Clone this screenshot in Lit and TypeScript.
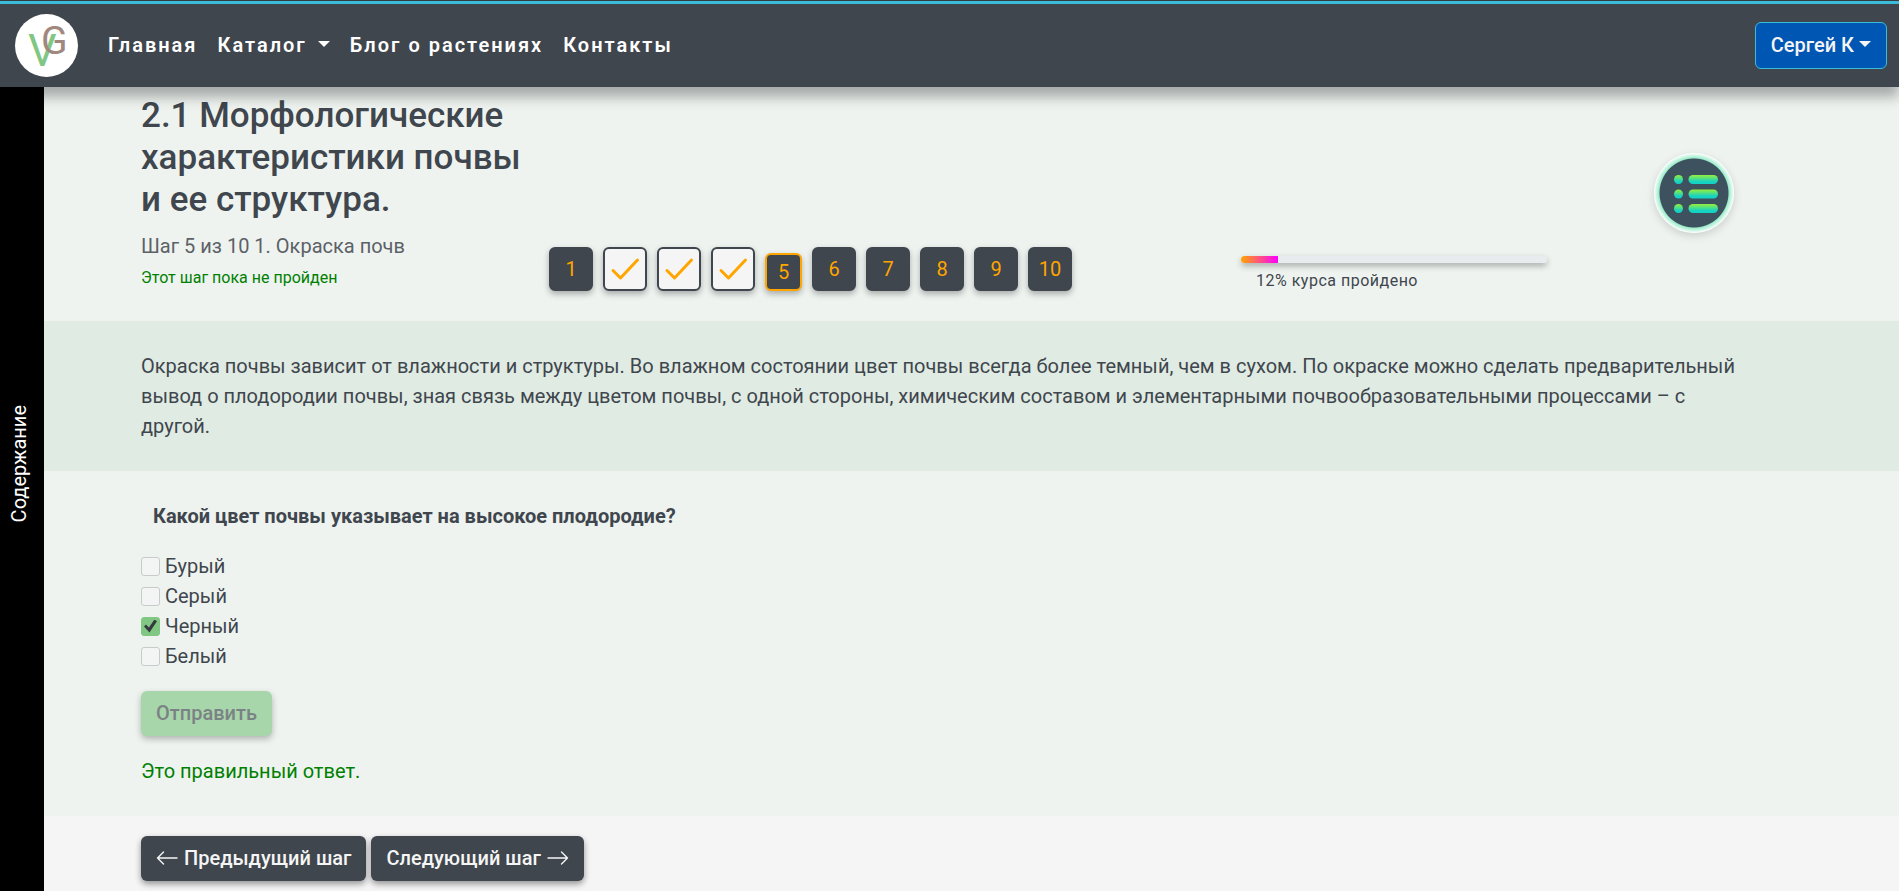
import { LitElement, html, css, svg } from "lit";
import { customElement, state } from "lit/decorators.js";

interface Step {
  n: number;
  status: "done" | "current" | "plain";
}

@customElement("site-logo")
class SiteLogo extends LitElement {
  static styles = css`
    :host { display: block; }
    svg { display: block; width: 63px; height: 63px; }
    .v { font: 400 45px Roboto, sans-serif; fill: #81c784; }
    .g { font: 400 39px Roboto, sans-serif; fill: #a1887f; }
  `;
  render() {
    return html`<svg viewBox="0 0 63 63" role="img" aria-label="VG">
      <circle cx="31.5" cy="31.5" r="31.5" fill="#fff"></circle>
      <text class="v" x="13" y="52">V</text>
      <text class="g" x="26" y="40">G</text>
    </svg>`;
  }
}

@customElement("step-list")
class StepList extends LitElement {
  static properties = { steps: { attribute: false } };
  declare steps: Step[];

  static styles = css`
    :host { display: block; }
    .steps { display: flex; align-items: flex-end; gap: 10px; margin: 0; padding: 0; list-style: none; }
    .step {
      box-sizing: border-box; display: flex; align-items: center; justify-content: center;
      width: 44px; height: 44px; border: 2px solid #3f464d; border-radius: 6px;
      background: #3f464d; color: orange; text-decoration: none;
      font: 400 20px/30px Roboto, sans-serif; box-shadow: 0 3px 6px rgba(0, 0, 0, 0.3);
    }
    .done { background: #f5f5f5; }
    .current { width: 37px; height: 38px; border-color: orange; }
    svg { display: block; width: 30px; height: 24px; }
  `;
  render() {
    return html`<ol class="steps">
      ${this.steps.map(
        (s) => html`<li>
          <a class="step ${s.status}" href="#step-${s.n}" aria-label="Шаг ${s.n}">
            ${s.status === "done"
              ? html`<svg viewBox="0 0 30 24" fill="none" stroke="orange" stroke-width="3" stroke-linecap="round" stroke-linejoin="round">
                  <path d="M3 13.5 L10.5 21 L27.5 3"></path>
                </svg>`
              : s.n}
          </a>
        </li>`
      )}
    </ol>`;
  }
}

@customElement("app-root")
class AppRoot extends LitElement {
  @state() private progress = 12;
  private steps: Step[] = Array.from({ length: 10 }, (_, i) => ({
    n: i + 1,
    status: i + 1 === 5 ? "current" : i >= 1 && i <= 3 ? "done" : "plain",
  }));
  private answers = [
    { id: "brown", text: "Бурый", checked: false },
    { id: "grey", text: "Серый", checked: false },
    { id: "black", text: "Черный", checked: true },
    { id: "white", text: "Белый", checked: false },
  ];

  static styles = css`
    :host {
      display: flex; flex-direction: column; min-height: 100vh;
      font: 400 20px/30px Roboto, sans-serif; color: #3f464d; background: #f5f5f5;
    }
    a { text-decoration: none; color: inherit; }
    button { font: inherit; font-weight: 500; border: 0; border-radius: 6px; cursor: pointer; }
    .line { height: 3px; border-top: 1px solid #343a40; background: #3bbcd9; }
    .header {
      position: relative; z-index: 1; background: #3f464d;
      box-shadow: 0 10px 12px rgba(0, 0, 0, 0.3);
    }
    .bar { display: flex; align-items: center; padding: 10px 12px 10px 15px; }
    .nav { display: flex; gap: 20px; margin-left: 30px; padding-bottom: 2px; flex: 1; color: #fff; font-weight: 600; letter-spacing: 2px; }
    .caret {
      display: inline-block; vertical-align: 5px; border: 6px solid transparent;
      border-top-color: currentColor; border-bottom: 0;
    }
    .nav .caret { margin-left: 11px; }
    .user { padding: 7px 15px 8px; border: 1px solid #3bbcd9; background: #0056b3; color: #f5f5f5; }
    .user .caret { margin-left: 5px; }
    .body { flex: 1; display: flex; }
    .side {
      width: 44px; flex: none; display: flex; align-items: center; justify-content: center;
      box-sizing: border-box; padding: 0 6px 50px 0; border-radius: 0; background: #000; color: #fff; font-weight: 400;
    }
    .side-text { writing-mode: vertical-rl; transform: rotate(180deg); }
    .main { flex: 1; min-width: 0; }
    .section { padding: 30px 149px 30px 97px; background: #eef3f0; }
    .reading { background: #e0ebe3; }
    .top {
      display: grid; grid-template-columns: 400fr 684fr 306fr 195fr; column-gap: 8px;
      padding-top: 8px; padding-bottom: 30px;
    }
    .title { margin: 0 0 10px; font-size: 35px; line-height: 42px; font-weight: 500; }
    .step-name { margin: 0; color: #5c6166; }
    .pending { margin: 4px 0 0; font-size: 16px; line-height: 26px; color: green; }
    .steps-col { align-self: end; }
    .progress-col { align-self: end; }
    .track { display: flex; height: 7px; border-radius: 4px; background: #e9ecef; overflow: hidden; }
    .track-wrap { border-radius: 4px; box-shadow: 0 3px 6px rgba(0, 0, 0, 0.3); }
    .fill { background: linear-gradient(90deg, orange, magenta); }
    .progress-text { display: block; margin: 8px 15px 0; font-size: 16px; line-height: 20px; letter-spacing: 0.5px; }
    .toc-col { display: flex; justify-content: flex-end; align-items: flex-start; padding: 58px 16px 0 0; }
    .toc {
      display: flex; align-items: center; justify-content: center; width: 80px; height: 80px; padding: 0;
      border-radius: 50%; background: radial-gradient(circle, #3d525e 34px, #9ceccb 35px, #fff 40px);
      box-shadow: 0 3px 8px rgba(0, 0, 0, 0.15);
    }
    .toc svg { width: 48px; height: 40px; }
    .reading p { margin: 0; }
    .quiz { margin: 0; border: 0; padding: 0; }
    .question { padding: 0; margin: 0 12px 20px; font-weight: 700; }
    .option { display: flex; align-items: center; gap: 5px; }
    .check {
      appearance: none; box-sizing: border-box; width: 19px; height: 19px; margin: 0; display: grid; place-items: center;
      border: 1px solid #c8cbca; border-radius: 3px; background: #f3f5f4;
    }
    .check:checked { background: #81c784; border-color: #81c784; }
    .check:checked::before {
      content: ""; width: 13px; height: 13px; background: #343a40;
      clip-path: polygon(0 54%, 15% 39%, 38% 62%, 80% 0, 100% 14%, 42% 100%);
    }
    .submit { display: block; margin-top: 20px; padding: 7px 15px 8px; background: #81c784; color: #3f464d; opacity: 0.65; box-shadow: 0 3px 6px rgba(0, 0, 0, 0.4); }
    .result { margin: 20px 0 0; color: green; }
    .pager { display: flex; gap: 5px; padding: 20px 97px 10px; }
    .page-btn {
      display: flex; align-items: center; gap: 6px; padding: 7px 15px 8px; background: #3f464d; color: #f5f5f5;
      box-shadow: 0 3px 6px rgba(0, 0, 0, 0.4);
    }
    .page-btn svg { width: 22px; height: 14px; }
  `;

  private arrow(d: string) {
    return html`<svg viewBox="0 0 22 14" fill="none" stroke="currentColor" stroke-width="1.4" stroke-linecap="round" stroke-linejoin="round" aria-hidden="true"><path d=${d}></path></svg>`;
  }

  render() {
    return html`
      <header class="header">
        <div class="line"></div>
        <div class="bar">
          <a href="#home"><site-logo></site-logo></a>
          <nav class="nav">
            <a href="#home">Главная</a>
            <a href="#catalog">Каталог<span class="caret"></span></a>
            <a href="#blog">Блог о растениях</a>
            <a href="#contacts">Контакты</a>
          </nav>
          <button class="user" type="button">Сергей К<span class="caret"></span></button>
        </div>
      </header>
      <div class="body">
        <button class="side" type="button"><span class="side-text">Содержание</span></button>
        <main class="main">
          <section class="section top">
            <div>
              <h1 class="title">2.1 Морфологические характеристики почвы и ее структура.</h1>
              <p class="step-name">Шаг 5 из 10 1. Окраска почв</p>
              <p class="pending">Этот шаг пока не пройден</p>
            </div>
            <div class="steps-col"><step-list .steps=${this.steps}></step-list></div>
            <div class="progress-col">
              <div class="track-wrap">
                <div class="track"><div class="fill" style="width:${this.progress}%"></div></div>
              </div>
              <span class="progress-text">${this.progress}% курса пройдено</span>
            </div>
            <div class="toc-col">
              <button class="toc" type="button" aria-label="Список шагов">
                <svg viewBox="-4 -2 48 40" aria-hidden="true">
                  <defs>
                    <linearGradient id="lime" x1="0" y1="0" x2="0" y2="1">
                      <stop offset="0" stop-color="#94f03c"></stop>
                      <stop offset="0.75" stop-color="#14d2c4"></stop>
                    </linearGradient>
                  </defs>
                  ${[0, 14.5, 29].map(
                    (y) => svg`<rect x="0" y=${y} width="9" height="9" rx="4.5" fill="url(#lime)"></rect>
                      <rect x="14.5" y=${y} width="29.5" height="9" rx="4.5" fill="url(#lime)"></rect>`
                  )}
                </svg>
              </button>
            </div>
          </section>
          <section class="section reading">
            <p>Окраска почвы зависит от влажности и структуры. Во влажном состоянии цвет почвы всегда более темный, чем в сухом. По окраске можно сделать предварительный вывод о плодородии почвы, зная связь между цветом почвы, с одной стороны, химическим составом и элементарными почвообразовательными процессами – с другой.</p>
          </section>
          <section class="section">
            <fieldset class="quiz">
              <legend class="question">Какой цвет почвы указывает на высокое плодородие?</legend>
              ${this.answers.map(
                (a) => html`<div class="option">
                  <input class="check" type="checkbox" id=${a.id} ?checked=${a.checked} />
                  <label for=${a.id}>${a.text}</label>
                </div>`
              )}
            </fieldset>
            <button class="submit" type="button" disabled>Отправить</button>
            <p class="result">Это правильный ответ.</p>
          </section>
          <div class="pager">
            <button class="page-btn" type="button">${this.arrow("M21 7 H1.5 M7.5 1 L1.5 7 L7.5 13")}Предыдущий шаг</button>
            <button class="page-btn" type="button">Следующий шаг${this.arrow("M1 7 H20.5 M14.5 1 L20.5 7 L14.5 13")}</button>
          </div>
        </main>
      </div>
    `;
  }
}
